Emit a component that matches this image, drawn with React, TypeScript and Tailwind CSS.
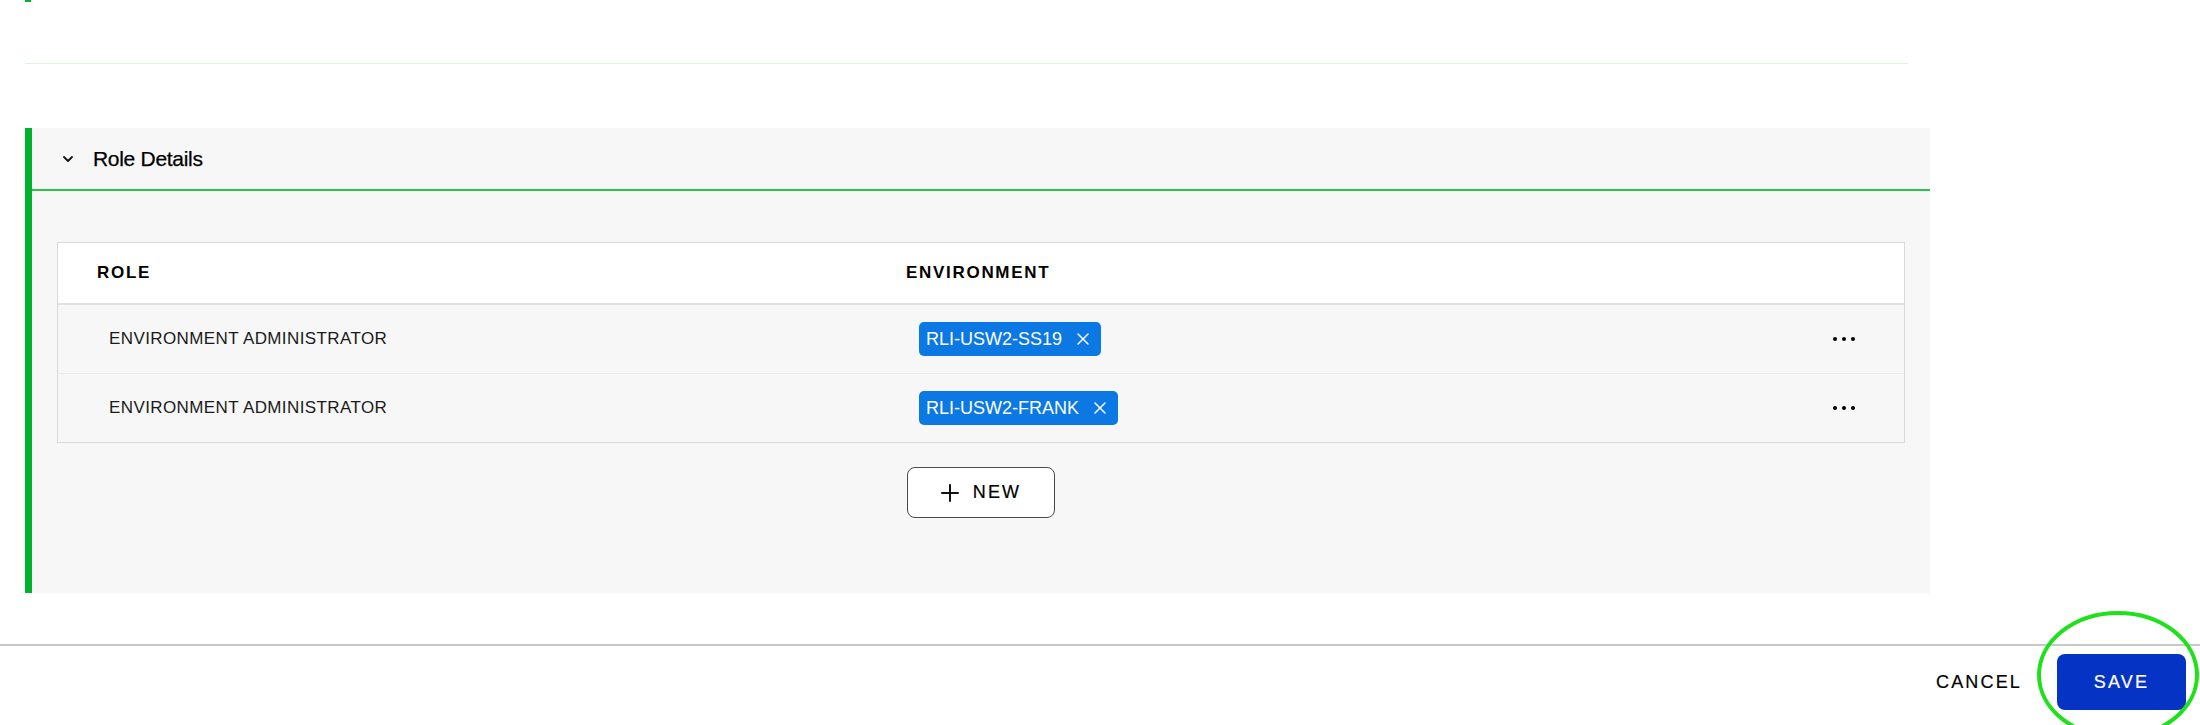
import React from "react";

type RoleRow = {
  role: string;
  environment: string;
};

const rows: RoleRow[] = [
  { role: "ENVIRONMENT ADMINISTRATOR", environment: "RLI-USW2-SS19" },
  { role: "ENVIRONMENT ADMINISTRATOR", environment: "RLI-USW2-FRANK" },
];

const Chevron = () => (
  <svg width="10" height="6" viewBox="0 0 10 6" fill="none">
    <path d="M1 1L5 5L9 1" stroke="#111" strokeWidth="1.8" strokeLinecap="round" strokeLinejoin="round" />
  </svg>
);

const CloseIcon = () => (
  <svg width="12" height="12" viewBox="0 0 12 12" fill="none">
    <path d="M1 1L11 11M11 1L1 11" stroke="white" strokeWidth="1.5" strokeLinecap="round" />
  </svg>
);

const PlusIcon = () => (
  <svg width="18" height="18" viewBox="0 0 18 18" fill="none">
    <path d="M9 1V17M1 9H17" stroke="#111" strokeWidth="2" strokeLinecap="round" />
  </svg>
);

const Chip = ({ label }: { label: string }) => (
  <span className="inline-flex h-[34px] items-center gap-[15px] rounded-[5px] bg-[#0b78e3] pl-[7px] pr-[12px] text-[18px] text-white">
    {label}
    <CloseIcon />
  </span>
);

const MoreDots = () => (
  <button type="button" className="flex items-center gap-[5px]">
    <span className="h-[4px] w-[4px] rounded-full bg-black" />
    <span className="h-[4px] w-[4px] rounded-full bg-black" />
    <span className="h-[4px] w-[4px] rounded-full bg-black" />
  </button>
);

const RoleTable = () => (
  <div className="border border-[#d9d9d9]">
    {/* header */}
    <div className="grid h-[62px] grid-cols-[848px_1fr_72px] items-center border-b-2 border-[#e2e2e2] bg-white text-[17px] font-bold tracking-[0.1em]">
      <div className="pl-[39px]">ROLE</div>
      <div>ENVIRONMENT</div>
      <div />
    </div>

    {rows.map((row, i) => (
      <div
        key={row.environment}
        className={`grid grid-cols-[848px_1fr_72px] items-center bg-[#f7f7f7] ${
          i < rows.length - 1 ? "h-[69px] border-b border-[#ececec]" : "h-[68px]"
        }`}
      >
        <div className="pl-[51px] text-[17px] tracking-[0.4px] text-[#1a1a1a]">{row.role}</div>
        <div className="pl-[13px]">
          <Chip label={row.environment} />
        </div>
        <div className="pl-[1px]">
          <MoreDots />
        </div>
      </div>
    ))}
  </div>
);

export default function App() {
  return (
    <div className="relative h-[725px] w-[2200px] overflow-hidden bg-white font-['Liberation_Sans',Arial,sans-serif] text-black">
      <div className="pl-[25px] pr-[270px]">
        {/* end of previous section */}
        <div className="h-[2px] w-[6px] bg-[#00b22d]" />
        <div className="mr-[22px] mt-[61px] h-px bg-[#dcf5de]" />

        {/* Role Details panel */}
        <section className="mt-[64px] flex bg-[#f7f7f7]">
          <div className="w-[7px] shrink-0 bg-[#00b22d]" />
          <div className="flex-1">
            <div className="flex h-[63px] items-center gap-[20px] border-b-2 border-[#2ec150] pl-[31px]">
              <Chevron />
              <span className="text-[21px] tracking-[-0.3px] [-webkit-text-stroke:0.25px]">Role Details</span>
            </div>

            <div className="px-[25px] pb-[75px] pt-[51px]">
              <RoleTable />
              <div className="mt-[24px] flex justify-center">
                <button
                  type="button"
                  className="flex h-[51px] w-[148px] items-center justify-center gap-[14px] rounded-[8px] border border-[#4a4a4a] bg-white text-[18px] tracking-[0.12em] [-webkit-text-stroke:0.2px]"
                >
                  <PlusIcon />
                  NEW
                </button>
              </div>
            </div>
          </div>
        </section>
      </div>

      {/* footer */}
      <footer className="mt-[51px] flex justify-end border-t-2 border-[#c8c8c8] pr-[14px] pt-[8px]">
        <div className="flex items-center gap-[35px]">
          <button type="button" className="text-[18px] tracking-[0.12em] [-webkit-text-stroke:0.2px]">
            CANCEL
          </button>
          <button
            type="button"
            className="h-[56px] w-[129px] rounded-[8px] bg-[#0533c4] text-[18px] tracking-[0.12em] text-white [-webkit-text-stroke:0.2px]"
          >
            SAVE
          </button>
        </div>
      </footer>

      {/* annotation ring round the save button */}
      <svg className="pointer-events-none absolute left-[2030px] top-[603px]" width="170" height="150" viewBox="0 0 170 150" fill="none">
        <ellipse cx="88" cy="72" rx="79" ry="62" stroke="#1fe01a" strokeWidth="4" />
      </svg>
    </div>
  );
}
